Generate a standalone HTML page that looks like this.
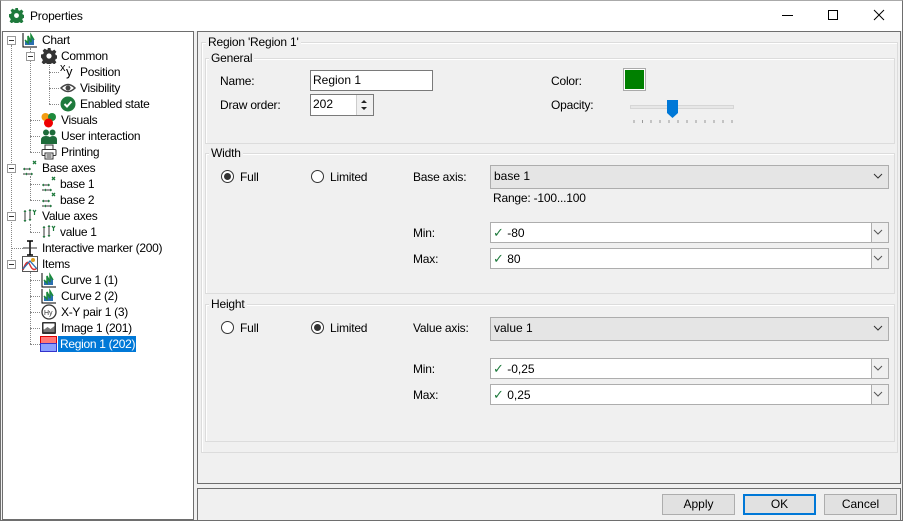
<!DOCTYPE html>
<html><head><meta charset="utf-8"><style>
*{box-sizing:border-box;margin:0;padding:0}
body{width:903px;height:521px;overflow:hidden;background:#f0f0f0;font-family:"Liberation Sans",sans-serif;font-size:12px;color:#000;position:relative}
.a{position:absolute}
.t{position:absolute;white-space:nowrap;font-size:12px;line-height:14px;letter-spacing:-0.2px}
.grp{position:absolute;border:1px solid #dcdcdc;box-shadow:inset 1px 1px 0 #fff}
.gt{position:absolute;background:#f0f0f0;padding:0 2px;font-size:12px;line-height:14px;top:-8px;left:4px;letter-spacing:-0.2px}
.inp{position:absolute;background:#fff;border:1px solid #7a7a7a;font-size:12px;line-height:18px;padding-left:2px}
.combo{position:absolute;background:#e5e5e5;border:1px solid #adadad;font-size:12px;line-height:21px;padding-left:3px}
.cb{position:absolute;background:#fff;border:1px solid #adadad;font-size:12px;line-height:19px;padding-left:2px}
.cb .btn{position:absolute;right:0;top:0;width:17px;height:19px;border-left:1px solid #adadad;background:#f0f0f0}
.radio{position:absolute;width:13px;height:13px;border:1px solid #333;border-radius:50%;background:#fff}
.radio.on::after{content:"";position:absolute;left:2px;top:2px;width:7px;height:7px;border-radius:50%;background:#333}
.pb{position:absolute;top:494px;width:73px;height:21px;background:#e1e1e1;border:1px solid #adadad;text-align:center;line-height:19px}
.tr{position:absolute;white-space:nowrap;line-height:14px;font-size:12px;letter-spacing:-0.3px}
.ic{position:absolute;width:16px;height:16px}
.dl{position:absolute;border-left:1px dotted #888}
.dh{position:absolute;border-top:1px dotted #888}
.pm{position:absolute;width:9px;height:9px;border:1px solid #999;background:#fff}
.pm::after{content:"";position:absolute;left:1px;top:3px;width:5px;height:1px;background:#333}
</style></head><body>
<div class="a" style="left:0;top:0;width:903px;height:521px;border:1px solid #6e6e6e;border-top-color:#aaa"></div>
<div class="a" style="left:1px;top:1px;width:901px;height:30px;background:#fff"></div>
<svg class="a" style="left:9px;top:8px" width="15" height="15" viewBox="0 0 16 16"><path fill="#1e7a3c" d="M6.5 0h3l.4 2.2 1.5.7 1.9-1.3 2.1 2.1-1.3 1.9.7 1.5 2.2.4v3l-2.2.4-.7 1.5 1.3 1.9-2.1 2.1-1.9-1.3-1.5.7-.4 2.2h-3l-.4-2.2-1.5-.7-1.9 1.3-2.1-2.1 1.3-1.9-.7-1.5L0 9.5v-3l2.2-.4.7-1.5-1.3-1.9 2.1-2.1 1.9 1.3 1.5-.7z"/><circle cx="8" cy="8" r="2.6" fill="#fff"/></svg>
<div class="t" style="left:30px;top:9px">Properties</div>
<div class="a" style="left:782px;top:15px;width:11px;height:1px;background:#000"></div>
<div class="a" style="left:828px;top:10px;width:10px;height:10px;border:1px solid #000"></div>
<svg class="a" style="left:873px;top:9px" width="12" height="12"><path d="M1 1L11 11M11 1L1 11" stroke="#000" stroke-width="1"/></svg>

<div class="a" style="left:2px;top:31px;width:192px;height:489px;background:#fff;border:1px solid #6e6e6e"></div>
<div class="dl" style="left:11px;top:45px;height:220px"></div>
<div class="dl" style="left:30px;top:48px;height:104px"></div>
<div class="dl" style="left:49px;top:62px;height:42px"></div>
<div class="dl" style="left:30px;top:176px;height:24px"></div>
<div class="dl" style="left:30px;top:224px;height:8px"></div>
<div class="dl" style="left:30px;top:272px;height:72px"></div>
<div class="dh" style="left:30px;top:120px;width:10px"></div>
<div class="dh" style="left:30px;top:136px;width:10px"></div>
<div class="dh" style="left:30px;top:152px;width:10px"></div>
<div class="dh" style="left:49px;top:72px;width:10px"></div>
<div class="dh" style="left:49px;top:88px;width:10px"></div>
<div class="dh" style="left:49px;top:104px;width:10px"></div>
<div class="dh" style="left:30px;top:184px;width:10px"></div>
<div class="dh" style="left:30px;top:200px;width:10px"></div>
<div class="dh" style="left:30px;top:232px;width:10px"></div>
<div class="dh" style="left:11px;top:248px;width:12px"></div>
<div class="dh" style="left:30px;top:280px;width:10px"></div>
<div class="dh" style="left:30px;top:296px;width:10px"></div>
<div class="dh" style="left:30px;top:312px;width:10px"></div>
<div class="dh" style="left:30px;top:328px;width:10px"></div>
<div class="dh" style="left:30px;top:344px;width:10px"></div>
<div class="pm" style="left:7px;top:36px"></div>
<div class="pm" style="left:26px;top:52px"></div>
<div class="pm" style="left:7px;top:164px"></div>
<div class="pm" style="left:7px;top:212px"></div>
<div class="pm" style="left:7px;top:260px"></div>

<svg class="ic" style="left:22px;top:32px" viewBox="0 0 16 16"><path d="M1 1v14h14" stroke="#000" fill="none"/><path d="M3 13V8l3 3V4l3 6V3l3 5v5z" fill="#2a6fb0"/><path d="M3 8l3 3V4l3 6V3l3 5" stroke="#1a8a3a" fill="none" stroke-width="1.5"/></svg>
<div class="tr" style="left:42px;top:33px">Chart</div>
<svg class="ic" style="left:41px;top:48px" viewBox="0 0 16 16"><path fill="#333" d="M6.5 0h3l.4 2.2 1.5.7 1.9-1.3 2.1 2.1-1.3 1.9.7 1.5 2.2.4v3l-2.2.4-.7 1.5 1.3 1.9-2.1 2.1-1.9-1.3-1.5.7-.4 2.2h-3l-.4-2.2-1.5-.7-1.9 1.3-2.1-2.1 1.3-1.9-.7-1.5L0 9.5v-3l2.2-.4.7-1.5-1.3-1.9 2.1-2.1 1.9 1.3 1.5-.7z"/><circle cx="8" cy="8" r="2.6" fill="#fff"/></svg>
<div class="tr" style="left:61px;top:49px">Common</div>
<div class="tr" style="left:60px;top:63px;font-size:11px;line-height:11px">x</div><div class="tr" style="left:66px;top:65px;font-size:13px">ẏ</div>
<div class="tr" style="left:80px;top:65px">Position</div>
<svg class="ic" style="left:60px;top:80px" viewBox="0 0 16 16"><path d="M1 8Q8 1 15 8Q8 15 1 8z" fill="none" stroke="#444" stroke-width="1.5"/><circle cx="8" cy="8" r="2.5" fill="#444"/></svg>
<div class="tr" style="left:80px;top:81px">Visibility</div>
<svg class="ic" style="left:60px;top:96px" viewBox="0 0 16 16"><circle cx="8" cy="8" r="7.5" fill="#1e7a3c"/><path d="M4.5 8l2.5 2.5 4.5-5" stroke="#fff" stroke-width="2" fill="none"/></svg>
<div class="tr" style="left:80px;top:97px">Enabled state</div>
<svg class="ic" style="left:41px;top:112px" viewBox="0 0 16 16"><circle cx="4.5" cy="5" r="4" fill="#f39c12"/><circle cx="11" cy="5" r="4" fill="#1e8a3c"/><circle cx="7.5" cy="11" r="4.5" fill="#e00"/></svg>
<div class="tr" style="left:61px;top:113px">Visuals</div>
<svg class="ic" style="left:41px;top:128px" viewBox="0 0 16 16"><circle cx="5" cy="4.5" r="3" fill="#1e6b3a"/><circle cx="11.5" cy="4.5" r="3" fill="#1e6b3a"/><path d="M0 16v-4q0-4 5-4t5 4v4zM8 16v-4q0-4 4-4t4 4v4z" fill="#1e6b3a"/></svg>
<div class="tr" style="left:61px;top:129px">User interaction</div>
<svg class="ic" style="left:41px;top:144px" viewBox="0 0 16 16"><rect x="4" y="1" width="8" height="5" fill="#fff" stroke="#333"/><rect x="1" y="5.5" width="14" height="6" rx="1" fill="#fff" stroke="#333"/><rect x="4" y="9" width="8" height="6" fill="#fff" stroke="#333"/><path d="M5.5 11h5M5.5 13h5" stroke="#333"/></svg>
<div class="tr" style="left:61px;top:145px">Printing</div>
<svg class="ic" style="left:22px;top:160px" viewBox="0 0 16 16"><path d="M1 9h8M1 14h10" stroke="#333"/><path d="M1 9l2-1.5v3zM9 9l-2-1.5v3zM3 14l2-1.5v3zM11 14l-2-1.5v3z" fill="#1e7a3c"/><path d="M11 1l3 3M14 1l-3 3" stroke="#1e7a3c" stroke-width="1.3"/></svg>
<div class="tr" style="left:42px;top:161px">Base axes</div>
<svg class="ic" style="left:41px;top:176px" viewBox="0 0 16 16"><path d="M1 9h8M1 14h10" stroke="#333"/><path d="M1 9l2-1.5v3zM9 9l-2-1.5v3zM3 14l2-1.5v3zM11 14l-2-1.5v3z" fill="#1e7a3c"/><path d="M11 1l3 3M14 1l-3 3" stroke="#1e7a3c" stroke-width="1.3"/></svg>
<div class="tr" style="left:60px;top:177px">base 1</div>
<svg class="ic" style="left:41px;top:192px" viewBox="0 0 16 16"><path d="M1 9h8M1 14h10" stroke="#333"/><path d="M1 9l2-1.5v3zM9 9l-2-1.5v3zM3 14l2-1.5v3zM11 14l-2-1.5v3z" fill="#1e7a3c"/><path d="M11 1l3 3M14 1l-3 3" stroke="#1e7a3c" stroke-width="1.3"/></svg>
<div class="tr" style="left:60px;top:193px">base 2</div>
<svg class="ic" style="left:22px;top:208px" viewBox="0 0 16 16"><path d="M3 2v12M8 1v12" stroke="#333"/><path d="M3 2l-1.5 2h3zM3 14l-1.5-2h3zM8 1l-1.5 2h3zM8 13l-1.5-2h3z" fill="#1e7a3c"/><path d="M11 2l1.5 2 1.5-2M12.5 4v3" stroke="#1e7a3c" stroke-width="1.2" fill="none"/></svg>
<div class="tr" style="left:42px;top:209px">Value axes</div>
<svg class="ic" style="left:41px;top:224px" viewBox="0 0 16 16"><path d="M3 2v12M8 1v12" stroke="#333"/><path d="M3 2l-1.5 2h3zM3 14l-1.5-2h3zM8 1l-1.5 2h3zM8 13l-1.5-2h3z" fill="#1e7a3c"/><path d="M11 2l1.5 2 1.5-2M12.5 4v3" stroke="#1e7a3c" stroke-width="1.2" fill="none"/></svg>
<div class="tr" style="left:60px;top:225px">value 1</div>
<svg class="ic" style="left:22px;top:240px" viewBox="0 0 16 16"><path d="M8 1v14M5 1h6M5 15h6" stroke="#000" stroke-width="1.5"/><path d="M1 8h14" stroke="#333"/></svg>
<div class="tr" style="left:42px;top:241px">Interactive marker (200)</div>
<svg class="ic" style="left:22px;top:256px" viewBox="0 0 16 16"><rect x=".5" y=".5" width="15" height="15" fill="#fff" stroke="#555"/><path d="M1 14Q5 2 8 9T15 12" stroke="#d33" fill="none" stroke-width="1.5"/><path d="M1 13L8 5 15 13" stroke="#2a6fb0" fill="none" stroke-width="1.3"/><circle cx="11" cy="4" r="2" fill="#e0a020"/></svg>
<div class="tr" style="left:42px;top:257px">Items</div>
<svg class="ic" style="left:41px;top:272px" viewBox="0 0 16 16"><path d="M1 1v14h14" stroke="#000" fill="none"/><path d="M3 13V8l3 3V4l3 6V3l3 5v5z" fill="#2a6fb0"/><path d="M3 8l3 3V4l3 6V3l3 5" stroke="#1a8a3a" fill="none" stroke-width="1.5"/></svg>
<div class="tr" style="left:61px;top:273px">Curve 1 (1)</div>
<svg class="ic" style="left:41px;top:288px" viewBox="0 0 16 16"><path d="M1 1v14h14" stroke="#000" fill="none"/><path d="M3 13V8l3 3V4l3 6V3l3 5v5z" fill="#2a6fb0"/><path d="M3 8l3 3V4l3 6V3l3 5" stroke="#1a8a3a" fill="none" stroke-width="1.5"/></svg>
<div class="tr" style="left:61px;top:289px">Curve 2 (2)</div>
<svg class="ic" style="left:41px;top:304px" viewBox="0 0 16 16"><circle cx="8" cy="8" r="7" fill="#fff" stroke="#333" stroke-width="1.3"/><text x="3" y="11" font-size="7" font-family="Liberation Sans" fill="#333">Hy</text></svg>
<div class="tr" style="left:61px;top:305px">X-Y pair 1 (3)</div>
<svg class="ic" style="left:41px;top:320px" viewBox="0 0 16 16"><rect x="1" y="2" width="14" height="12" rx="1" fill="#333"/><rect x="2.5" y="3.5" width="11" height="6" fill="#fff"/><path d="M2.5 10l4-3 3 2 4-3v6h-11z" fill="#777"/></svg>
<div class="tr" style="left:61px;top:321px">Image 1 (201)</div>
<div class="a" style="left:40px;top:336px;width:17px;height:8px;background:#f77;border:1px solid #d00"></div>
<div class="a" style="left:40px;top:343px;width:17px;height:9px;background:#8aa0ff;border:1px solid #33c"></div>
<div class="a" style="left:58px;top:336px;width:78px;height:16px;background:#0078d7"></div>
<div class="tr" style="left:60px;top:337px;color:#fff">Region 1 (202)</div>

<div class="a" style="left:197px;top:31px;width:704px;height:453px;border:1px solid #6e6e6e"></div>
<div class="a" style="left:197px;top:488px;width:704px;height:33px;border:1px solid #6e6e6e;border-bottom:none"></div>

<div class="grp" style="left:201px;top:42px;width:697px;height:411px"><div class="gt">Region 'Region 1'</div></div>
<div class="grp" style="left:205px;top:58px;width:690px;height:86px"><div class="gt" style="left:3px">General</div></div>
<div class="t" style="left:220px;top:74px">Name:</div>
<div class="inp" style="left:310px;top:70px;width:123px;height:21px">Region 1</div>
<div class="t" style="left:220px;top:98px">Draw order:</div>
<div class="inp" style="left:310px;top:94px;width:64px;height:22px">202</div>
<div class="a" style="left:356px;top:95px;width:17px;height:20px;background:#f0f0f0;border-left:1px solid #ccc"></div>
<svg class="a" style="left:359px;top:97px" width="10" height="16"><path d="M2 6l3-3 3 3zM2 10l3 3 3-3z" fill="#222"/></svg>
<div class="t" style="left:551px;top:74px">Color:</div>
<div class="a" style="left:623px;top:68px;width:23px;height:23px;border:1px solid #aaa;background:#fff"></div>
<div class="a" style="left:625px;top:70px;width:19px;height:19px;background:#008000"></div>
<div class="t" style="left:551px;top:98px">Opacity:</div>
<div class="a" style="left:630px;top:105px;width:104px;height:4px;background:#e7e7e7;border:1px solid #d6d6d6"></div>
<svg class="a" style="left:667px;top:100px" width="11" height="18"><path d="M0 0h11v13l-5.5 5L0 13z" fill="#0078d7"/></svg>
<svg class="a" style="left:633px;top:119px" width="100" height="6"><g stroke="#999"><path d="M1 1v3M9.5 1v3M18 1v3M27 1v3M36 1v3M45 1v3M54 1v3M63 1v3M72 1v3M81 1v3M90 1v3M99 1v3"/></g></svg>

<div class="grp" style="left:205px;top:153px;width:690px;height:141px"><div class="gt" style="left:3px">Width</div></div>
<div class="radio on" style="left:221px;top:170px"></div><div class="t" style="left:240px;top:170px">Full</div>
<div class="radio" style="left:311px;top:170px"></div><div class="t" style="left:330px;top:170px">Limited</div>
<div class="t" style="left:413px;top:170px">Base axis:</div>
<div class="combo" style="left:490px;top:165px;width:399px;height:24px">base 1</div>
<svg class="a" style="left:873px;top:173px" width="10" height="7"><path d="M1 1l4 4 4-4" stroke="#333" fill="none"/></svg>
<div class="t" style="left:493px;top:191px">Range: -100...100</div>
<div class="t" style="left:413px;top:226px">Min:</div>
<div class="cb" style="left:490px;top:222px;width:399px;height:21px"><span style="color:#1e7a3c;font-size:13px">✓</span> -80<div class="btn"></div></div>
<svg class="a" style="left:873px;top:229px" width="10" height="7"><path d="M1 1l4 4 4-4" stroke="#555" fill="none"/></svg>
<div class="t" style="left:413px;top:252px">Max:</div>
<div class="cb" style="left:490px;top:248px;width:399px;height:21px"><span style="color:#1e7a3c;font-size:13px">✓</span> 80<div class="btn"></div></div>
<svg class="a" style="left:873px;top:255px" width="10" height="7"><path d="M1 1l4 4 4-4" stroke="#555" fill="none"/></svg>

<div class="grp" style="left:205px;top:304px;width:690px;height:138px"><div class="gt" style="left:3px">Height</div></div>
<div class="radio" style="left:221px;top:321px"></div><div class="t" style="left:240px;top:321px">Full</div>
<div class="radio on" style="left:311px;top:321px"></div><div class="t" style="left:330px;top:321px">Limited</div>
<div class="t" style="left:413px;top:321px">Value axis:</div>
<div class="combo" style="left:490px;top:317px;width:399px;height:24px">value 1</div>
<svg class="a" style="left:873px;top:325px" width="10" height="7"><path d="M1 1l4 4 4-4" stroke="#333" fill="none"/></svg>
<div class="t" style="left:413px;top:362px">Min:</div>
<div class="cb" style="left:490px;top:358px;width:399px;height:21px"><span style="color:#1e7a3c;font-size:13px">✓</span> -0,25<div class="btn"></div></div>
<svg class="a" style="left:873px;top:365px" width="10" height="7"><path d="M1 1l4 4 4-4" stroke="#555" fill="none"/></svg>
<div class="t" style="left:413px;top:388px">Max:</div>
<div class="cb" style="left:490px;top:384px;width:399px;height:21px"><span style="color:#1e7a3c;font-size:13px">✓</span> 0,25<div class="btn"></div></div>
<svg class="a" style="left:873px;top:391px" width="10" height="7"><path d="M1 1l4 4 4-4" stroke="#555" fill="none"/></svg>

<div class="pb" style="left:662px">Apply</div>
<div class="pb" style="left:743px;border:2px solid #0078d7;line-height:17px">OK</div>
<div class="pb" style="left:824px">Cancel</div>
</body></html>
